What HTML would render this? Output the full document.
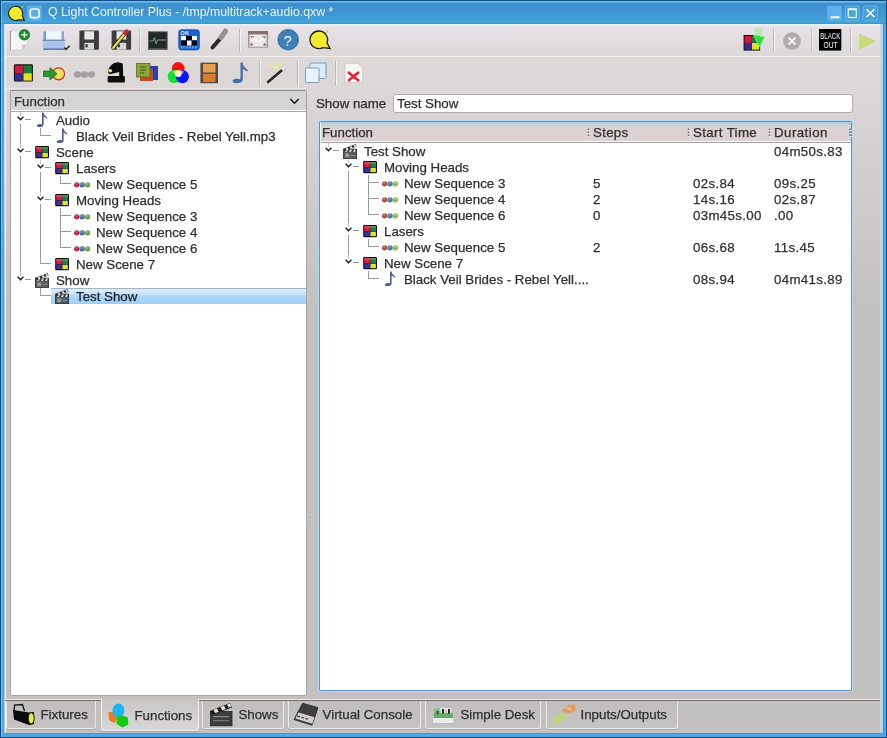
<!DOCTYPE html>
<html><head><meta charset="utf-8">
<style>
*{margin:0;padding:0;box-sizing:border-box}
html,body{width:887px;height:738px;overflow:hidden;background:#4a9dd6;font-family:"Liberation Sans",sans-serif;font-size:13.3px;color:#2f2f2f}
.a{position:absolute}
.t{position:absolute;white-space:nowrap;line-height:16px;height:16px;-webkit-text-stroke:0.25px #2f2f2f}
#frame{left:0;top:0;width:887px;height:738px;background:#4ea8e6;border:1px solid #0e4c7e}
#tb{left:1px;top:1px;width:885px;height:23px;background:linear-gradient(#6cc0f6 0,#5aaee6 1.5px,#3e8fcb 2.5px,#3f95d0 12px,#43a6dc 22px,#4a82aa 23px)}
#lline{left:1px;top:1px;width:1px;height:736px;background:#6cc0f2}
#title{left:48px;top:4px;font-size:12.3px;color:#e8f4fc;line-height:16px}
#content{left:4px;top:24px;width:876px;height:709px;background:linear-gradient(#dedada 0px,#dcd8d8 60px,#c3c0c0 280px,#c3c0c0 709px)}
.panel{background:#fff;border:1px solid #a9a5a5;border-radius:2px}
.hdr{background:linear-gradient(#dcd8d8,#d6d2d2)}
.sep{position:absolute;width:1px;background:#b8b4b4;box-shadow:1px 0 0 #f0eeee}
.sel{background:linear-gradient(#9fb6c6 0,#9fb6c6 1px,#dcedfa 1px,#c6def2 7px,#a9d5f8 8px,#a4d0f4 15px,#98c6ec 16px)}
.selt{color:#0e1c28}
.tab{background:linear-gradient(#c0bdbd,#c6c4c2);border:1px solid #ebe7e7;border-top:none;border-radius:0 0 3px 3px;box-shadow:0 1px 0 #b0acac}
.tabsel{background:linear-gradient(#c8c5c5,#d8d6d8);border:1px solid #f0eeee;border-top:none;border-radius:0 0 3px 3px;box-shadow:0 1px 0 #a8a4a4}
</style></head><body><div id="root" class="a" style="left:0;top:0;width:887px;height:738px;overflow:hidden;will-change:transform">
<div id="frame" class="a"></div>
<div id="tb" class="a"></div><div id="lline" class="a"></div>
<svg class="a" style="left:0;top:0" width="887" height="26" viewBox="0 0 887 26"><rect x="0" y="0" width="887" height="738" fill="none"/><path d="M22.27 15.83 A7.1 7.1 0 1 0 18.93 19.67 L24.2 20.4 Z" fill="#f2ea30" stroke="#1e1e14" stroke-width="1.1"/><path d="M21.5 8 L23.5 6" stroke="#6ad04a" stroke-width="1.5"/><rect x="27" y="5.6" width="15" height="15.5" rx="1.5" fill="#5aaee6"/><rect x="30.3" y="9" width="8.8" height="8.6" rx="2.2" fill="none" stroke="#f4fbff" stroke-width="1.7"/><rect x="827.2" y="5.7" width="14.6" height="15" rx="1.5" fill="#5db0ea"/><rect x="830.5" y="16.3" width="9" height="2" fill="#f4fbff"/><rect x="845.3" y="6" width="14" height="14.4" rx="1.5" fill="#4a9ed8" stroke="#6cbcee" stroke-width="0.8"/><rect x="848.3" y="9" width="8" height="8.5" fill="#45a6d8" stroke="#f4fbff" stroke-width="1.2"/><rect x="848.3" y="8.6" width="8" height="1.6" fill="#f4fbff"/><rect x="863.2" y="6" width="14.4" height="14.4" rx="1.5" fill="#4a9ed8" stroke="#6cbcee" stroke-width="0.8"/><path d="M866.5 9.3 L874.3 17 M874.3 9.3 L866.5 17" stroke="#f4fbff" stroke-width="1.6"/></svg>
<div id="title" class="a">Q Light Controller Plus - /tmp/multitrack+audio.qxw *</div>
<div id="content" class="a"></div>
<div class="a" style="left:880px;top:24px;width:3px;height:710px;background:linear-gradient(90deg,#e8f4f8,#a8c4d4 1px,#c0dcec 2px)"></div>
<div class="a" style="left:883px;top:24px;width:1px;height:710px;background:#4c86b8"></div>
<div class="a" style="left:4px;top:733px;width:880px;height:1px;background:#5a90c0"></div>
<div class="a" style="left:4px;top:24px;width:876px;height:1px;background:#e4f2f6"></div>
<div class="a" style="left:5px;top:25px;width:1px;height:708px;background:#eef4f6"></div>
<div class="a" style="left:6px;top:25px;width:874px;height:31px;background:linear-gradient(#eef2f2 0,#e9e3e9 1px,#e2dee2 12px,#dcd9d9 30px)"></div>
<div class="a" style="left:6px;top:56px;width:875px;height:1px;background:#f0eeee"></div>
<div class="a" style="left:6px;top:88px;width:300px;height:1px;background:#ebe9e9"></div>
<svg class="a" style="left:0;top:0" width="887" height="92" viewBox="0 0 887 92"><path d="M10.5 31 L26.5 31 L27.5 44 L22 50 L10.5 50 Z" fill="#f4f4f4" stroke="#d0d0d0" stroke-width="0.8"/><rect x="10" y="31" width="1" height="19" fill="#9a9a9a"/><path d="M27.5 44 L22 50 L22 45 Z" fill="#c8c8c8"/><circle cx="24.4" cy="34.8" r="5.2" fill="#1a8e2c" stroke="#0f6a1c" stroke-width="0.8"/><path d="M24.4 31.8 V37.8 M21.4 34.8 H27.4" stroke="#e8ffe8" stroke-width="1.4"/><rect x="44" y="31.3" width="19.5" height="9" fill="#eaf8ff"/><rect x="43.5" y="31.3" width="2.5" height="9" fill="#7b98c8"/><rect x="61.5" y="31.3" width="2.5" height="9" fill="#8aa6d4"/><rect x="42.8" y="39.7" width="22.2" height="9.6" fill="#a9c3ee"/><rect x="42.8" y="39.7" width="22.2" height="1.2" fill="#6e86b0"/><rect x="43.5" y="48.5" width="21" height="1.3" fill="#56698c"/><path d="M64.3 47.5 L66 49.5 L69.6 45.8" fill="none" stroke="#1a1a1a" stroke-width="1.4"/><rect x="79.4" y="30.5" width="19.5" height="19.2" rx="1" fill="#3c3c3c"/><rect x="84.4" y="31.3" width="9.6" height="8.2" fill="#e9e9e9"/><rect x="84.4" y="42.8" width="9.6" height="6.9" fill="#d6d6d6"/><rect x="85.4" y="44.3" width="2.4" height="3" fill="#3c3c3c"/><rect x="111.6" y="30.5" width="19.5" height="19.2" rx="1" fill="#3c3c3c"/><rect x="116.6" y="31.3" width="9.6" height="8.2" fill="#e9e9e9"/><rect x="116.6" y="42.8" width="9.6" height="6.9" fill="#d6d6d6"/><rect x="117.6" y="44.3" width="2.4" height="3" fill="#3c3c3c"/><path d="M112.5 48.8 L126.5 31.5" stroke="#222" stroke-width="3.8"/><path d="M112.5 48.8 L126.5 31.5" stroke="#e4dc50" stroke-width="2.2"/><path d="M124.2 34.3 L127.8 30" stroke="#c8263a" stroke-width="3.6"/><rect x="139" y="29" width="1" height="23" fill="#bdb8b8"/><rect x="140" y="29" width="1" height="23" fill="#f2f0f0"/><rect x="148" y="31.3" width="19.7" height="18.6" fill="#5a5a5a"/><rect x="149" y="32.3" width="17.7" height="16" fill="#1f2a26"/><path d="M149.5 41 H153 L154.5 37.5 L156 44 L157.5 40 H166" fill="none" stroke="#7a9a8a" stroke-width="1"/><rect x="178.8" y="29.8" width="20.5" height="20.1" rx="2.5" fill="#1a62d0" stroke="#0e4aa8" stroke-width="0.8"/><rect x="181" y="35.9" width="16" height="9.6" fill="#020818"/><rect x="181" y="35.9" width="5" height="4.3" fill="#f4f8ff"/><rect x="192" y="35.9" width="5" height="4.3" fill="#f4f8ff"/><rect x="187" y="40.5" width="4.5" height="5" fill="#f4f8ff"/><text x="180.5" y="35" font-size="5.5" fill="#d8e8ff" font-family="Liberation Sans" font-weight="bold">ON</text><path d="M181.5 46 V48.5 M184 46 V48.5 M187 46 V48.5 M190 46 V48.5 M193 46 V48.5 M196 46 V48.5" stroke="#8ab8f0" stroke-width="1.2"/><path d="M212.5 47.5 L222.5 36" stroke="#2a2a2a" stroke-width="4" stroke-linecap="round"/><path d="M221 37.5 L225.5 31" stroke="#9a9090" stroke-width="5" stroke-linecap="round"/><rect x="239" y="29" width="1" height="23" fill="#bdb8b8"/><rect x="240" y="29" width="1" height="23" fill="#f2f0f0"/><rect x="248.1" y="31.1" width="20" height="16.6" fill="#a49494"/><rect x="248.1" y="31.1" width="20" height="3.4" fill="#86706f"/><rect x="249.6" y="34.5" width="17" height="12.2" fill="#efe9e9"/><path d="M250.5 36 L254.5 36.5 L252 39 Z M265.8 36 L261.8 36.5 L264.3 39 Z M250.5 46 L251 42.5 L253.5 45 Z M265.8 46 L265.3 42.5 L262.8 45 Z" fill="#7a6666"/><path d="M252 37.5 L257 41.5 M264.3 37.5 L259.3 41.5" stroke="#ffffff" stroke-width="1.3"/><circle cx="288.2" cy="39.7" r="10.3" fill="#3f7fb8"/><circle cx="288.2" cy="39.7" r="10.3" fill="none" stroke="#2a5f94" stroke-width="0.8"/><text x="283.6" y="45.6" font-size="15" fill="#f0f8ff" font-family="Liberation Sans">?</text><path d="M327.07 42.81 A8.8 8.8 0 1 0 322.93 47.57 L330 48.5 Z" fill="#f2ea30" stroke="#1e1e14" stroke-width="1.3"/><path d="M325.5 33 L328 30.5" stroke="#b8d860" stroke-width="2"/><rect x="743.6" y="35" width="16.5" height="15.6" fill="#111"/><rect x="744.6" y="36" width="7.2" height="6.8" fill="#d01a3c"/><rect x="752" y="36" width="7.2" height="6.8" fill="#1d7a3a"/><rect x="744.6" y="43" width="7.2" height="6.6" fill="#3a2e8c"/><rect x="752" y="43" width="7.2" height="6.6" fill="#e2e41e"/><rect x="754.5" y="28" width="7.5" height="8" fill="#b4e8a8" opacity="0.85"/><path d="M753.5 35 L764.5 37 L759.5 47 Z" fill="#2ee02e" stroke="#7af07a" stroke-width="0.8"/><rect x="773" y="29" width="1" height="23" fill="#bdb8b8"/><rect x="774" y="29" width="1" height="23" fill="#f2f0f0"/><circle cx="792" cy="41" r="8.8" fill="#b0acac"/><path d="M788.5 37.5 L795.5 44.5 M795.5 37.5 L788.5 44.5" stroke="#f4f4f4" stroke-width="1.8"/><rect x="811" y="29" width="1" height="23" fill="#bdb8b8"/><rect x="812" y="29" width="1" height="23" fill="#f2f0f0"/><rect x="819" y="29" width="22.3" height="21.6" fill="#000"/><text x="820.3" y="38.5" font-size="8.3" fill="#fff" font-family="Liberation Sans" textLength="20" lengthAdjust="spacingAndGlyphs">BLACK</text><text x="823.5" y="48.3" font-size="9" fill="#fff" font-family="Liberation Sans" textLength="14" lengthAdjust="spacingAndGlyphs">OUT</text><rect x="850" y="29" width="1" height="23" fill="#bdb8b8"/><rect x="851" y="29" width="1" height="23" fill="#f2f0f0"/><path d="M859 33.5 L876 41.5 L859 49.7 Z" fill="#c6dc78"/><rect x="13.9" y="64.3" width="19" height="17.3" rx="1" fill="#111"/><rect x="15" y="65.4" width="8.3" height="7.6" fill="#d01a3c"/><rect x="23.5" y="65.4" width="8.3" height="7.6" fill="#1d7a3a"/><rect x="15" y="73.2" width="8.3" height="7.4" fill="#3a2e8c"/><rect x="23.5" y="73.2" width="8.3" height="7.4" fill="#e2e41e"/><circle cx="58.6" cy="73.8" r="6" fill="#f0e060" stroke="#d02828" stroke-width="1.2"/><path d="M43.5 71 H50 V67.6 L57 73.8 L50 80 V76.6 H43.5 Z" fill="#2a9a2a" stroke="#1a6a1a" stroke-width="0.8"/><ellipse cx="77.5" cy="74.5" rx="3.6" ry="3.2" fill="#a6a2a2"/><ellipse cx="84.5" cy="74.5" rx="3.6" ry="3.2" fill="#a6a2a2"/><ellipse cx="91.5" cy="74.5" rx="3.6" ry="3.2" fill="#a6a2a2"/><path d="M108 72.5 C108.3 66.5 113 62.5 118 62.3 L122.8 63.5 L123.2 76.5 L119.2 76.2 L119.2 72 L113 73.6 L109.5 74.2 Z" fill="#0c0c0c"/><rect x="107.7" y="75.9" width="17.2" height="6.5" rx="1.2" fill="#0c0c0c"/><ellipse cx="110.2" cy="70.8" rx="2" ry="1.7" fill="#dfe88a"/><rect x="147" y="66" width="11" height="14" fill="#2a3ea8"/><rect x="140" y="69" width="13" height="12" fill="#c84a20"/><rect x="136.5" y="63.5" width="13.5" height="13.5" fill="#8aa838" stroke="#5a6a20" stroke-width="0.8"/><path d="M140 67 H146 M140 70 H146 M140 73 H144" stroke="#3a4a10" stroke-width="0.9"/><circle cx="178.2" cy="68.5" r="6.4" fill="#ff1010"/><circle cx="174.3" cy="76.5" r="6.6" fill="#10e030"/><circle cx="182.4" cy="76.6" r="6.6" fill="#1010ff"/><circle cx="178.3" cy="73.8" r="3.2" fill="#ffffff"/><path d="M172.5 71.5 Q178 68.5 184 71.5 L182 74 L175 74 Z" fill="#fff080" opacity="0.7"/><rect x="200.4" y="62.7" width="17.6" height="20.5" fill="#4a4a4a"/><rect x="203" y="64" width="12.5" height="8.5" fill="#e8a050"/><rect x="203" y="73.8" width="12.5" height="8.2" fill="#e07a28"/><path d="M240.5 62.5 L242.8 62.5 L242.8 79.5 C242.8 82.7 238.6 83.5 235 83 C231.6 82.5 232 79.7 235 79 C237 78.5 239 78.8 240.5 79.2 Z" fill="#4a6aa8"/><path d="M241.5 62.5 C243 66 246 68 248 70.5 L247 71.5 C245.5 70 243.5 69 241.5 68.5 Z" fill="#4a6aa8"/><rect x="259" y="61" width="1" height="25" fill="#bdb8b8"/><rect x="260" y="61" width="1" height="25" fill="#f2f0f0"/><path d="M268 82 L284.5 68" stroke="#2a2a2a" stroke-width="2.6" stroke-linecap="round"/><path d="M282 70 L285.5 67" stroke="#f0f0f0" stroke-width="2.6"/><circle cx="270" cy="65" r="1.8" fill="#e8ec80"/><circle cx="275.8" cy="67.5" r="2" fill="#e8ec80"/><circle cx="280.3" cy="64.5" r="1.8" fill="#e8ec80"/><rect x="297" y="61" width="1" height="25" fill="#bdb8b8"/><rect x="298" y="61" width="1" height="25" fill="#f2f0f0"/><rect x="310" y="63" width="16" height="15.5" rx="1" fill="#d8ecfc" stroke="#7d9cb8" stroke-width="1"/><rect x="305.5" y="68" width="13.5" height="14.5" rx="1" fill="#e6f4ff" stroke="#7d9cb8" stroke-width="1"/><rect x="335" y="61" width="1" height="25" fill="#bdb8b8"/><rect x="336" y="61" width="1" height="25" fill="#f2f0f0"/><path d="M345 63.5 L358 63.5 L362.5 68 L362.5 82.5 L345 82.5 Z" fill="#f8f8f8" stroke="#c8c8c8" stroke-width="0.8"/><path d="M348 72 L359 81 M359 72 L348 81" stroke="#e8202a" stroke-width="2.4"/></svg>

<!-- left panel -->
<div class="a panel" style="left:10px;top:90px;width:297px;height:606px;border-color:#8e8c8c #a4a2a2 #a8a6a6 #a4a2a2"></div>
<div class="a" style="left:11px;top:91px;width:295px;height:21px;background:#d6d5d5;border-bottom:1px solid #aaa8a8;box-shadow:inset 0 -1px 0 #fafafa"></div>
<div class="t" style="left:14px;top:94px">Function</div>
<svg class="a" style="left:17.0px;top:116.3px" width="7" height="5" viewBox="0 0 7 5"><path d="M0.6 0.8 L3.5 3.8 L6.4 0.8" fill="none" stroke="#1c1c1c" stroke-width="1.45"/></svg>
<div class="a" style="left:20px;top:112px;width:1px;height:4px;background:#c8c8c8"></div>
<div class="a" style="left:20px;top:124px;width:1px;height:4px;background:#9a9a9a"></div>
<div class="a" style="left:25px;top:119px;width:6px;height:1px;background:#9a9a9a"></div>
<svg class="a" style="left:36px;top:112px" width="12" height="16" viewBox="0 0 12 16"><path d="M6 0.5 L7.6 0.5 L7.6 12.5 C7.6 14.8 4.5 15.3 2.2 14.9 C0.2 14.5 0.5 12.6 2.6 12.2 C4 11.9 5.2 12 6 12.4 Z" fill="#4e5c9c"/><path d="M7 0.5 C8 3 10.5 4.5 11.6 6.3 L10.9 6.8 C9.8 5.6 8.2 5 7 4.6 Z" fill="#4e5c9c"/></svg>
<div class="t" style="left:56px;top:113px">Audio</div>
<div class="a" style="left:20px;top:128px;width:1px;height:16px;background:#9a9a9a"></div>
<div class="a" style="left:40px;top:128px;width:1px;height:8px;background:#9a9a9a"></div>
<div class="a" style="left:40px;top:135px;width:11px;height:1px;background:#9a9a9a"></div>
<svg class="a" style="left:56px;top:128px" width="12" height="16" viewBox="0 0 12 16"><path d="M6 0.5 L7.6 0.5 L7.6 12.5 C7.6 14.8 4.5 15.3 2.2 14.9 C0.2 14.5 0.5 12.6 2.6 12.2 C4 11.9 5.2 12 6 12.4 Z" fill="#4e5c9c"/><path d="M7 0.5 C8 3 10.5 4.5 11.6 6.3 L10.9 6.8 C9.8 5.6 8.2 5 7 4.6 Z" fill="#4e5c9c"/></svg>
<div class="t" style="left:76px;top:129px">Black Veil Brides - Rebel Yell.mp3</div>
<svg class="a" style="left:17.0px;top:148.3px" width="7" height="5" viewBox="0 0 7 5"><path d="M0.6 0.8 L3.5 3.8 L6.4 0.8" fill="none" stroke="#1c1c1c" stroke-width="1.45"/></svg>
<div class="a" style="left:20px;top:144px;width:1px;height:4px;background:#c8c8c8"></div>
<div class="a" style="left:20px;top:156px;width:1px;height:4px;background:#9a9a9a"></div>
<div class="a" style="left:25px;top:151px;width:6px;height:1px;background:#9a9a9a"></div>
<svg class="a" style="left:35px;top:146px" width="14" height="13" viewBox="0 0 14 13"><rect x="0.2" y="0" width="13.8" height="12.2" rx="1.3" fill="#0a0a0a"/><rect x="1.2" y="1" width="5.8" height="5.4" fill="#d81840"/><rect x="1.2" y="1" width="5.8" height="2.2" fill="#ee3a62"/><rect x="7.3" y="1" width="5.7" height="5.6" fill="#247e42"/><rect x="7.3" y="1" width="5.7" height="2" fill="#3a9a5a"/><rect x="1.2" y="6.6" width="5.8" height="4.6" fill="#3e2f96"/><rect x="7.4" y="6.9" width="5.5" height="4.3" fill="#d6e42a"/></svg>
<div class="t" style="left:56px;top:145px">Scene</div>
<div class="a" style="left:20px;top:160px;width:1px;height:16px;background:#9a9a9a"></div>
<svg class="a" style="left:37.0px;top:164.3px" width="7" height="5" viewBox="0 0 7 5"><path d="M0.6 0.8 L3.5 3.8 L6.4 0.8" fill="none" stroke="#1c1c1c" stroke-width="1.45"/></svg>
<div class="a" style="left:40px;top:160px;width:1px;height:4px;background:#c8c8c8"></div>
<div class="a" style="left:40px;top:172px;width:1px;height:4px;background:#9a9a9a"></div>
<div class="a" style="left:45px;top:167px;width:6px;height:1px;background:#9a9a9a"></div>
<svg class="a" style="left:55px;top:162px" width="14" height="13" viewBox="0 0 14 13"><rect x="0.2" y="0" width="13.8" height="12.2" rx="1.3" fill="#0a0a0a"/><rect x="1.2" y="1" width="5.8" height="5.4" fill="#d81840"/><rect x="1.2" y="1" width="5.8" height="2.2" fill="#ee3a62"/><rect x="7.3" y="1" width="5.7" height="5.6" fill="#247e42"/><rect x="7.3" y="1" width="5.7" height="2" fill="#3a9a5a"/><rect x="1.2" y="6.6" width="5.8" height="4.6" fill="#3e2f96"/><rect x="7.4" y="6.9" width="5.5" height="4.3" fill="#d6e42a"/></svg>
<div class="t" style="left:76px;top:161px">Lasers</div>
<div class="a" style="left:20px;top:176px;width:1px;height:16px;background:#9a9a9a"></div>
<div class="a" style="left:40px;top:176px;width:1px;height:16px;background:#9a9a9a"></div>
<div class="a" style="left:60px;top:176px;width:1px;height:8px;background:#9a9a9a"></div>
<div class="a" style="left:60px;top:183px;width:11px;height:1px;background:#9a9a9a"></div>
<svg class="a" style="left:74px;top:182px" width="17" height="6" viewBox="0 0 17 6"><ellipse cx="2.7" cy="2.8" rx="2.7" ry="2.6" fill="#c8203c"/><ellipse cx="8.100000000000001" cy="2.8" rx="2.7" ry="2.6" fill="#3f74a8"/><ellipse cx="13.5" cy="2.8" rx="2.7" ry="2.6" fill="#6fa048"/><ellipse cx="2.2" cy="1.9" rx="1.2" ry="0.9" fill="#fff" opacity="0.35"/><ellipse cx="7.6000000000000005" cy="1.9" rx="1.2" ry="0.9" fill="#fff" opacity="0.35"/><ellipse cx="13.0" cy="1.9" rx="1.2" ry="0.9" fill="#fff" opacity="0.35"/></svg>
<div class="t" style="left:96px;top:177px">New Sequence 5</div>
<div class="a" style="left:20px;top:192px;width:1px;height:16px;background:#9a9a9a"></div>
<svg class="a" style="left:37.0px;top:196.3px" width="7" height="5" viewBox="0 0 7 5"><path d="M0.6 0.8 L3.5 3.8 L6.4 0.8" fill="none" stroke="#1c1c1c" stroke-width="1.45"/></svg>
<div class="a" style="left:40px;top:192px;width:1px;height:4px;background:#c8c8c8"></div>
<div class="a" style="left:40px;top:204px;width:1px;height:4px;background:#9a9a9a"></div>
<div class="a" style="left:45px;top:199px;width:6px;height:1px;background:#9a9a9a"></div>
<svg class="a" style="left:55px;top:194px" width="14" height="13" viewBox="0 0 14 13"><rect x="0.2" y="0" width="13.8" height="12.2" rx="1.3" fill="#0a0a0a"/><rect x="1.2" y="1" width="5.8" height="5.4" fill="#d81840"/><rect x="1.2" y="1" width="5.8" height="2.2" fill="#ee3a62"/><rect x="7.3" y="1" width="5.7" height="5.6" fill="#247e42"/><rect x="7.3" y="1" width="5.7" height="2" fill="#3a9a5a"/><rect x="1.2" y="6.6" width="5.8" height="4.6" fill="#3e2f96"/><rect x="7.4" y="6.9" width="5.5" height="4.3" fill="#d6e42a"/></svg>
<div class="t" style="left:76px;top:193px">Moving Heads</div>
<div class="a" style="left:20px;top:208px;width:1px;height:16px;background:#9a9a9a"></div>
<div class="a" style="left:40px;top:208px;width:1px;height:16px;background:#9a9a9a"></div>
<div class="a" style="left:60px;top:208px;width:1px;height:8px;background:#9a9a9a"></div>
<div class="a" style="left:60px;top:216px;width:1px;height:8px;background:#9a9a9a"></div>
<div class="a" style="left:60px;top:215px;width:11px;height:1px;background:#9a9a9a"></div>
<svg class="a" style="left:74px;top:214px" width="17" height="6" viewBox="0 0 17 6"><ellipse cx="2.7" cy="2.8" rx="2.7" ry="2.6" fill="#c8203c"/><ellipse cx="8.100000000000001" cy="2.8" rx="2.7" ry="2.6" fill="#3f74a8"/><ellipse cx="13.5" cy="2.8" rx="2.7" ry="2.6" fill="#6fa048"/><ellipse cx="2.2" cy="1.9" rx="1.2" ry="0.9" fill="#fff" opacity="0.35"/><ellipse cx="7.6000000000000005" cy="1.9" rx="1.2" ry="0.9" fill="#fff" opacity="0.35"/><ellipse cx="13.0" cy="1.9" rx="1.2" ry="0.9" fill="#fff" opacity="0.35"/></svg>
<div class="t" style="left:96px;top:209px">New Sequence 3</div>
<div class="a" style="left:20px;top:224px;width:1px;height:16px;background:#9a9a9a"></div>
<div class="a" style="left:40px;top:224px;width:1px;height:16px;background:#9a9a9a"></div>
<div class="a" style="left:60px;top:224px;width:1px;height:8px;background:#9a9a9a"></div>
<div class="a" style="left:60px;top:232px;width:1px;height:8px;background:#9a9a9a"></div>
<div class="a" style="left:60px;top:231px;width:11px;height:1px;background:#9a9a9a"></div>
<svg class="a" style="left:74px;top:230px" width="17" height="6" viewBox="0 0 17 6"><ellipse cx="2.7" cy="2.8" rx="2.7" ry="2.6" fill="#c8203c"/><ellipse cx="8.100000000000001" cy="2.8" rx="2.7" ry="2.6" fill="#3f74a8"/><ellipse cx="13.5" cy="2.8" rx="2.7" ry="2.6" fill="#6fa048"/><ellipse cx="2.2" cy="1.9" rx="1.2" ry="0.9" fill="#fff" opacity="0.35"/><ellipse cx="7.6000000000000005" cy="1.9" rx="1.2" ry="0.9" fill="#fff" opacity="0.35"/><ellipse cx="13.0" cy="1.9" rx="1.2" ry="0.9" fill="#fff" opacity="0.35"/></svg>
<div class="t" style="left:96px;top:225px">New Sequence 4</div>
<div class="a" style="left:20px;top:240px;width:1px;height:16px;background:#9a9a9a"></div>
<div class="a" style="left:40px;top:240px;width:1px;height:16px;background:#9a9a9a"></div>
<div class="a" style="left:60px;top:240px;width:1px;height:8px;background:#9a9a9a"></div>
<div class="a" style="left:60px;top:247px;width:11px;height:1px;background:#9a9a9a"></div>
<svg class="a" style="left:74px;top:246px" width="17" height="6" viewBox="0 0 17 6"><ellipse cx="2.7" cy="2.8" rx="2.7" ry="2.6" fill="#c8203c"/><ellipse cx="8.100000000000001" cy="2.8" rx="2.7" ry="2.6" fill="#3f74a8"/><ellipse cx="13.5" cy="2.8" rx="2.7" ry="2.6" fill="#6fa048"/><ellipse cx="2.2" cy="1.9" rx="1.2" ry="0.9" fill="#fff" opacity="0.35"/><ellipse cx="7.6000000000000005" cy="1.9" rx="1.2" ry="0.9" fill="#fff" opacity="0.35"/><ellipse cx="13.0" cy="1.9" rx="1.2" ry="0.9" fill="#fff" opacity="0.35"/></svg>
<div class="t" style="left:96px;top:241px">New Sequence 6</div>
<div class="a" style="left:20px;top:256px;width:1px;height:16px;background:#9a9a9a"></div>
<div class="a" style="left:40px;top:256px;width:1px;height:8px;background:#9a9a9a"></div>
<div class="a" style="left:40px;top:263px;width:11px;height:1px;background:#9a9a9a"></div>
<svg class="a" style="left:55px;top:258px" width="14" height="13" viewBox="0 0 14 13"><rect x="0.2" y="0" width="13.8" height="12.2" rx="1.3" fill="#0a0a0a"/><rect x="1.2" y="1" width="5.8" height="5.4" fill="#d81840"/><rect x="1.2" y="1" width="5.8" height="2.2" fill="#ee3a62"/><rect x="7.3" y="1" width="5.7" height="5.6" fill="#247e42"/><rect x="7.3" y="1" width="5.7" height="2" fill="#3a9a5a"/><rect x="1.2" y="6.6" width="5.8" height="4.6" fill="#3e2f96"/><rect x="7.4" y="6.9" width="5.5" height="4.3" fill="#d6e42a"/></svg>
<div class="t" style="left:76px;top:257px">New Scene 7</div>
<svg class="a" style="left:17.0px;top:276.3px" width="7" height="5" viewBox="0 0 7 5"><path d="M0.6 0.8 L3.5 3.8 L6.4 0.8" fill="none" stroke="#1c1c1c" stroke-width="1.45"/></svg>
<div class="a" style="left:20px;top:272px;width:1px;height:4px;background:#c8c8c8"></div>
<div class="a" style="left:25px;top:279px;width:6px;height:1px;background:#9a9a9a"></div>
<svg class="a" style="left:35px;top:272px" width="14" height="16" viewBox="0 0 14 16"><rect x="0.6" y="6.2" width="13" height="9.6" fill="#5a5a5a" stroke="#2c2c2c" stroke-width="0.9"/><path d="M1.2 6.5 H13 V9 H1.2 Z" fill="#3a3a3a"/><path d="M3 6.5 L5 6.5 L4 9 L2 9 Z M7 6.5 L9 6.5 L8 9 L6 9 Z M11 6.5 L13 6.5 L12 9 L10 9 Z" fill="#d8d8d8"/><rect x="2.2" y="10.5" width="4" height="3.6" fill="#9a9a9a"/><rect x="7.5" y="12" width="5" height="1" fill="#8a8a8a"/><path d="M0.6 5.8 L12.6 1 L13.6 3.4 L1.6 8 Z" fill="#2a2a2a"/><path d="M2.6 5.4 L4.6 4.6 L5.6 6.6 L3.6 7.3 Z M6.6 3.8 L8.6 3 L9.6 5 L7.6 5.7 Z M10.4 2.3 L12.2 1.6 L13.1 3.4 L11.4 4 Z" fill="#e6e6e6"/></svg>
<div class="t" style="left:56px;top:273px">Show</div>
<div class="a sel" style="left:51px;top:288px;width:255px;height:16px"></div>
<div class="a" style="left:40px;top:288px;width:1px;height:8px;background:#9a9a9a"></div>
<div class="a" style="left:40px;top:295px;width:11px;height:1px;background:#9a9a9a"></div>
<svg class="a" style="left:55px;top:288px" width="14" height="16" viewBox="0 0 14 16"><rect x="0.6" y="6.2" width="13" height="9.6" fill="#4a5e6a" stroke="#2c2c2c" stroke-width="0.9"/><path d="M1.2 6.5 H13 V9 H1.2 Z" fill="#3a3a3a"/><path d="M3 6.5 L5 6.5 L4 9 L2 9 Z M7 6.5 L9 6.5 L8 9 L6 9 Z M11 6.5 L13 6.5 L12 9 L10 9 Z" fill="#d8d8d8"/><rect x="2.2" y="10.5" width="4" height="3.6" fill="#9a9a9a"/><rect x="7.5" y="12" width="5" height="1" fill="#8a8a8a"/><path d="M0.6 5.8 L12.6 1 L13.6 3.4 L1.6 8 Z" fill="#2a2a2a"/><path d="M2.6 5.4 L4.6 4.6 L5.6 6.6 L3.6 7.3 Z M6.6 3.8 L8.6 3 L9.6 5 L7.6 5.7 Z M10.4 2.3 L12.2 1.6 L13.1 3.4 L11.4 4 Z" fill="#e6e6e6"/></svg>
<div class="t selt" style="left:76px;top:289px">Test Show</div>

<!-- right -->
<div class="t" style="left:316px;top:96px">Show name</div>
<div class="a panel" style="left:393px;top:94px;width:460px;height:19px;border-color:#b0acac;border-radius:3px"></div>
<div class="t" style="left:397px;top:96px">Test Show</div>

<div class="a panel" style="left:319px;top:121px;width:533px;height:570px;border:1.5px solid #5296cc;border-top:1px solid #6a90b0;box-shadow:0 0 0 1px #b4daf4;border-radius:2px"></div>
<div class="a" style="left:320.5px;top:122px;width:530px;height:21px;background:linear-gradient(#b4ccd8,#d4d4d2 4px,#dcd3d1 6px,#dcd2d2 18px);border-bottom:1px solid #a89e9e;box-shadow:inset 0 -1px 0 #fdfafa"></div>
<div class="t" style="left:322px;top:125px">Function</div>
<div class="t" style="left:593px;top:125px;letter-spacing:0.3px">Steps</div>
<div class="t" style="left:693px;top:125px;letter-spacing:0.35px">Start Time</div>
<div class="t" style="left:774px;top:125px;letter-spacing:0.45px">Duration</div>
<svg class="a" style="left:325.0px;top:147.3px" width="7" height="5" viewBox="0 0 7 5"><path d="M0.6 0.8 L3.5 3.8 L6.4 0.8" fill="none" stroke="#1c1c1c" stroke-width="1.45"/></svg>
<div class="a" style="left:328px;top:143px;width:1px;height:4px;background:#c8c8c8"></div>
<div class="a" style="left:333px;top:150px;width:6px;height:1px;background:#9a9a9a"></div>
<svg class="a" style="left:343px;top:143px" width="14" height="16" viewBox="0 0 14 16"><rect x="0.6" y="6.2" width="13" height="9.6" fill="#5a5a5a" stroke="#2c2c2c" stroke-width="0.9"/><path d="M1.2 6.5 H13 V9 H1.2 Z" fill="#3a3a3a"/><path d="M3 6.5 L5 6.5 L4 9 L2 9 Z M7 6.5 L9 6.5 L8 9 L6 9 Z M11 6.5 L13 6.5 L12 9 L10 9 Z" fill="#d8d8d8"/><rect x="2.2" y="10.5" width="4" height="3.6" fill="#9a9a9a"/><rect x="7.5" y="12" width="5" height="1" fill="#8a8a8a"/><path d="M0.6 5.8 L12.6 1 L13.6 3.4 L1.6 8 Z" fill="#2a2a2a"/><path d="M2.6 5.4 L4.6 4.6 L5.6 6.6 L3.6 7.3 Z M6.6 3.8 L8.6 3 L9.6 5 L7.6 5.7 Z M10.4 2.3 L12.2 1.6 L13.1 3.4 L11.4 4 Z" fill="#e6e6e6"/></svg>
<div class="t" style="left:364px;top:144px">Test Show</div>
<svg class="a" style="left:345.0px;top:163.3px" width="7" height="5" viewBox="0 0 7 5"><path d="M0.6 0.8 L3.5 3.8 L6.4 0.8" fill="none" stroke="#1c1c1c" stroke-width="1.45"/></svg>
<div class="a" style="left:348px;top:159px;width:1px;height:4px;background:#c8c8c8"></div>
<div class="a" style="left:348px;top:171px;width:1px;height:4px;background:#9a9a9a"></div>
<div class="a" style="left:353px;top:166px;width:6px;height:1px;background:#9a9a9a"></div>
<svg class="a" style="left:363px;top:161px" width="14" height="13" viewBox="0 0 14 13"><rect x="0.2" y="0" width="13.8" height="12.2" rx="1.3" fill="#0a0a0a"/><rect x="1.2" y="1" width="5.8" height="5.4" fill="#d81840"/><rect x="1.2" y="1" width="5.8" height="2.2" fill="#ee3a62"/><rect x="7.3" y="1" width="5.7" height="5.6" fill="#247e42"/><rect x="7.3" y="1" width="5.7" height="2" fill="#3a9a5a"/><rect x="1.2" y="6.6" width="5.8" height="4.6" fill="#3e2f96"/><rect x="7.4" y="6.9" width="5.5" height="4.3" fill="#d6e42a"/></svg>
<div class="t" style="left:384px;top:160px">Moving Heads</div>
<div class="a" style="left:348px;top:175px;width:1px;height:16px;background:#9a9a9a"></div>
<div class="a" style="left:368px;top:175px;width:1px;height:8px;background:#9a9a9a"></div>
<div class="a" style="left:368px;top:183px;width:1px;height:8px;background:#9a9a9a"></div>
<div class="a" style="left:368px;top:182px;width:11px;height:1px;background:#9a9a9a"></div>
<svg class="a" style="left:382px;top:181px" width="17" height="6" viewBox="0 0 17 6"><ellipse cx="2.7" cy="2.8" rx="2.7" ry="2.6" fill="#c4442a"/><ellipse cx="8.100000000000001" cy="2.8" rx="2.7" ry="2.6" fill="#3f7cb0"/><ellipse cx="13.5" cy="2.8" rx="2.7" ry="2.6" fill="#a0b043"/><ellipse cx="2.2" cy="1.9" rx="1.2" ry="0.9" fill="#fff" opacity="0.35"/><ellipse cx="7.6000000000000005" cy="1.9" rx="1.2" ry="0.9" fill="#fff" opacity="0.35"/><ellipse cx="13.0" cy="1.9" rx="1.2" ry="0.9" fill="#fff" opacity="0.35"/></svg>
<div class="t" style="left:404px;top:176px">New Sequence 3</div>
<div class="a" style="left:348px;top:191px;width:1px;height:16px;background:#9a9a9a"></div>
<div class="a" style="left:368px;top:191px;width:1px;height:8px;background:#9a9a9a"></div>
<div class="a" style="left:368px;top:199px;width:1px;height:8px;background:#9a9a9a"></div>
<div class="a" style="left:368px;top:198px;width:11px;height:1px;background:#9a9a9a"></div>
<svg class="a" style="left:382px;top:197px" width="17" height="6" viewBox="0 0 17 6"><ellipse cx="2.7" cy="2.8" rx="2.7" ry="2.6" fill="#c4442a"/><ellipse cx="8.100000000000001" cy="2.8" rx="2.7" ry="2.6" fill="#3f7cb0"/><ellipse cx="13.5" cy="2.8" rx="2.7" ry="2.6" fill="#a0b043"/><ellipse cx="2.2" cy="1.9" rx="1.2" ry="0.9" fill="#fff" opacity="0.35"/><ellipse cx="7.6000000000000005" cy="1.9" rx="1.2" ry="0.9" fill="#fff" opacity="0.35"/><ellipse cx="13.0" cy="1.9" rx="1.2" ry="0.9" fill="#fff" opacity="0.35"/></svg>
<div class="t" style="left:404px;top:192px">New Sequence 4</div>
<div class="a" style="left:348px;top:207px;width:1px;height:16px;background:#9a9a9a"></div>
<div class="a" style="left:368px;top:207px;width:1px;height:8px;background:#9a9a9a"></div>
<div class="a" style="left:368px;top:214px;width:11px;height:1px;background:#9a9a9a"></div>
<svg class="a" style="left:382px;top:213px" width="17" height="6" viewBox="0 0 17 6"><ellipse cx="2.7" cy="2.8" rx="2.7" ry="2.6" fill="#c4442a"/><ellipse cx="8.100000000000001" cy="2.8" rx="2.7" ry="2.6" fill="#3f7cb0"/><ellipse cx="13.5" cy="2.8" rx="2.7" ry="2.6" fill="#a0b043"/><ellipse cx="2.2" cy="1.9" rx="1.2" ry="0.9" fill="#fff" opacity="0.35"/><ellipse cx="7.6000000000000005" cy="1.9" rx="1.2" ry="0.9" fill="#fff" opacity="0.35"/><ellipse cx="13.0" cy="1.9" rx="1.2" ry="0.9" fill="#fff" opacity="0.35"/></svg>
<div class="t" style="left:404px;top:208px">New Sequence 6</div>
<svg class="a" style="left:345.0px;top:227.3px" width="7" height="5" viewBox="0 0 7 5"><path d="M0.6 0.8 L3.5 3.8 L6.4 0.8" fill="none" stroke="#1c1c1c" stroke-width="1.45"/></svg>
<div class="a" style="left:348px;top:223px;width:1px;height:4px;background:#c8c8c8"></div>
<div class="a" style="left:348px;top:235px;width:1px;height:4px;background:#9a9a9a"></div>
<div class="a" style="left:353px;top:230px;width:6px;height:1px;background:#9a9a9a"></div>
<svg class="a" style="left:363px;top:225px" width="14" height="13" viewBox="0 0 14 13"><rect x="0.2" y="0" width="13.8" height="12.2" rx="1.3" fill="#0a0a0a"/><rect x="1.2" y="1" width="5.8" height="5.4" fill="#d81840"/><rect x="1.2" y="1" width="5.8" height="2.2" fill="#ee3a62"/><rect x="7.3" y="1" width="5.7" height="5.6" fill="#247e42"/><rect x="7.3" y="1" width="5.7" height="2" fill="#3a9a5a"/><rect x="1.2" y="6.6" width="5.8" height="4.6" fill="#3e2f96"/><rect x="7.4" y="6.9" width="5.5" height="4.3" fill="#d6e42a"/></svg>
<div class="t" style="left:384px;top:224px">Lasers</div>
<div class="a" style="left:348px;top:239px;width:1px;height:16px;background:#9a9a9a"></div>
<div class="a" style="left:368px;top:239px;width:1px;height:8px;background:#9a9a9a"></div>
<div class="a" style="left:368px;top:246px;width:11px;height:1px;background:#9a9a9a"></div>
<svg class="a" style="left:382px;top:245px" width="17" height="6" viewBox="0 0 17 6"><ellipse cx="2.7" cy="2.8" rx="2.7" ry="2.6" fill="#c4442a"/><ellipse cx="8.100000000000001" cy="2.8" rx="2.7" ry="2.6" fill="#3f7cb0"/><ellipse cx="13.5" cy="2.8" rx="2.7" ry="2.6" fill="#a0b043"/><ellipse cx="2.2" cy="1.9" rx="1.2" ry="0.9" fill="#fff" opacity="0.35"/><ellipse cx="7.6000000000000005" cy="1.9" rx="1.2" ry="0.9" fill="#fff" opacity="0.35"/><ellipse cx="13.0" cy="1.9" rx="1.2" ry="0.9" fill="#fff" opacity="0.35"/></svg>
<div class="t" style="left:404px;top:240px">New Sequence 5</div>
<svg class="a" style="left:345.0px;top:259.3px" width="7" height="5" viewBox="0 0 7 5"><path d="M0.6 0.8 L3.5 3.8 L6.4 0.8" fill="none" stroke="#1c1c1c" stroke-width="1.45"/></svg>
<div class="a" style="left:348px;top:255px;width:1px;height:4px;background:#c8c8c8"></div>
<div class="a" style="left:353px;top:262px;width:6px;height:1px;background:#9a9a9a"></div>
<svg class="a" style="left:363px;top:257px" width="14" height="13" viewBox="0 0 14 13"><rect x="0.2" y="0" width="13.8" height="12.2" rx="1.3" fill="#0a0a0a"/><rect x="1.2" y="1" width="5.8" height="5.4" fill="#d81840"/><rect x="1.2" y="1" width="5.8" height="2.2" fill="#ee3a62"/><rect x="7.3" y="1" width="5.7" height="5.6" fill="#247e42"/><rect x="7.3" y="1" width="5.7" height="2" fill="#3a9a5a"/><rect x="1.2" y="6.6" width="5.8" height="4.6" fill="#3e2f96"/><rect x="7.4" y="6.9" width="5.5" height="4.3" fill="#d6e42a"/></svg>
<div class="t" style="left:384px;top:256px">New Scene 7</div>
<div class="a" style="left:368px;top:271px;width:1px;height:8px;background:#9a9a9a"></div>
<div class="a" style="left:368px;top:278px;width:11px;height:1px;background:#9a9a9a"></div>
<svg class="a" style="left:384px;top:271px" width="12" height="16" viewBox="0 0 12 16"><path d="M6 0.5 L7.6 0.5 L7.6 12.5 C7.6 14.8 4.5 15.3 2.2 14.9 C0.2 14.5 0.5 12.6 2.6 12.2 C4 11.9 5.2 12 6 12.4 Z" fill="#4e5c9c"/><path d="M7 0.5 C8 3 10.5 4.5 11.6 6.3 L10.9 6.8 C9.8 5.6 8.2 5 7 4.6 Z" fill="#4e5c9c"/></svg>
<div class="t" style="left:404px;top:272px">Black Veil Brides - Rebel Yell....</div>
<div class="t" style="left:774px;top:144px;letter-spacing:0.33px">04m50s.83</div>
<div class="t" style="left:593px;top:176px;letter-spacing:0.33px">5</div>
<div class="t" style="left:693px;top:176px;letter-spacing:0.33px">02s.84</div>
<div class="t" style="left:774px;top:176px;letter-spacing:0.33px">09s.25</div>
<div class="t" style="left:593px;top:192px;letter-spacing:0.33px">2</div>
<div class="t" style="left:693px;top:192px;letter-spacing:0.33px">14s.16</div>
<div class="t" style="left:774px;top:192px;letter-spacing:0.33px">02s.87</div>
<div class="t" style="left:593px;top:208px;letter-spacing:0.33px">0</div>
<div class="t" style="left:693px;top:208px;letter-spacing:0.33px">03m45s.00</div>
<div class="t" style="left:774px;top:208px;letter-spacing:0.33px">.00</div>
<div class="t" style="left:593px;top:240px;letter-spacing:0.33px">2</div>
<div class="t" style="left:693px;top:240px;letter-spacing:0.33px">06s.68</div>
<div class="t" style="left:774px;top:240px;letter-spacing:0.33px">11s.45</div>
<div class="t" style="left:693px;top:272px;letter-spacing:0.33px">08s.94</div>
<div class="t" style="left:774px;top:272px;letter-spacing:0.33px">04m41s.89</div>

<svg class="a" style="left:0;top:0" width="887" height="738" viewBox="0 0 887 738">
<path d="M290.3 99 L294.5 103.2 L298.7 99" fill="none" stroke="#1c1c1c" stroke-width="1.6"/>
<rect x="587.8" y="128.60000000000002" width="1.4" height="1.4" fill="#6e6464"/><rect x="589.2" y="130.0" width="1" height="1" fill="#fbf6f6"/><rect x="587.8" y="131.60000000000002" width="1.4" height="1.4" fill="#6e6464"/><rect x="589.2" y="133.0" width="1" height="1" fill="#fbf6f6"/><rect x="587.8" y="134.60000000000002" width="1.4" height="1.4" fill="#6e6464"/><rect x="589.2" y="136.0" width="1" height="1" fill="#fbf6f6"/><rect x="687.8" y="128.60000000000002" width="1.4" height="1.4" fill="#6e6464"/><rect x="689.2" y="130.0" width="1" height="1" fill="#fbf6f6"/><rect x="687.8" y="131.60000000000002" width="1.4" height="1.4" fill="#6e6464"/><rect x="689.2" y="133.0" width="1" height="1" fill="#fbf6f6"/><rect x="687.8" y="134.60000000000002" width="1.4" height="1.4" fill="#6e6464"/><rect x="689.2" y="136.0" width="1" height="1" fill="#fbf6f6"/><rect x="768.8" y="128.60000000000002" width="1.4" height="1.4" fill="#6e6464"/><rect x="770.2" y="130.0" width="1" height="1" fill="#fbf6f6"/><rect x="768.8" y="131.60000000000002" width="1.4" height="1.4" fill="#6e6464"/><rect x="770.2" y="133.0" width="1" height="1" fill="#fbf6f6"/><rect x="768.8" y="134.60000000000002" width="1.4" height="1.4" fill="#6e6464"/><rect x="770.2" y="136.0" width="1" height="1" fill="#fbf6f6"/><rect x="849.3" y="128.60000000000002" width="1.4" height="1.4" fill="#6e6464"/><rect x="850.7" y="130.0" width="1" height="1" fill="#fbf6f6"/><rect x="849.3" y="131.60000000000002" width="1.4" height="1.4" fill="#6e6464"/><rect x="850.7" y="133.0" width="1" height="1" fill="#fbf6f6"/><rect x="849.3" y="134.60000000000002" width="1.4" height="1.4" fill="#6e6464"/><rect x="850.7" y="136.0" width="1" height="1" fill="#fbf6f6"/><rect x="309.5" y="512.5" width="1.2" height="1.2" fill="#a09c9c"/><rect x="310.5" y="513.7" width="1" height="1" fill="#e4e0e0"/><rect x="309.5" y="517.5" width="1.2" height="1.2" fill="#a09c9c"/><rect x="310.5" y="518.7" width="1" height="1" fill="#e4e0e0"/><rect x="309.5" y="521.5" width="1.2" height="1.2" fill="#a09c9c"/><rect x="310.5" y="522.7" width="1" height="1" fill="#e4e0e0"/></svg>
<div class="a" style="left:5px;top:699px;width:875px;height:1px;background:#eeeaea"></div>
<div class="a" style="left:5px;top:700px;width:875px;height:1px;background:#777373"></div>
<div class="a tab" style="left:6px;top:701px;width:90px;height:28px"></div>
<div class="t" style="left:40.5px;top:707px">Fixtures</div>
<div class="a tabsel" style="left:100.5px;top:699px;width:98.5px;height:32px"></div>
<div class="t" style="left:134.5px;top:708px">Functions</div>
<div class="a tab" style="left:202px;top:701px;width:82px;height:28px"></div>
<div class="t" style="left:238.4px;top:707px">Shows</div>
<div class="a tab" style="left:287.5px;top:701px;width:133.5px;height:28px"></div>
<div class="t" style="left:322.6px;top:707px">Virtual Console</div>
<div class="a tab" style="left:424.7px;top:701px;width:116.80000000000001px;height:28px"></div>
<div class="t" style="left:460.4px;top:707px">Simple Desk</div>
<div class="a tab" style="left:546.2px;top:701px;width:131.79999999999995px;height:28px"></div>
<div class="t" style="left:580.5px;top:707px">Inputs/Outputs</div><svg class="a" style="left:0;top:690px" width="887" height="48" viewBox="0 690 887 48"><path d="M14 712 L14.5 705 L22.5 704.5 L24.5 711" fill="none" stroke="#111" stroke-width="1.3"/><path d="M13 710 L29 712.5 L34 712 L34 724 L29 725 L14 719.5 Z" fill="#0a0a0a"/><ellipse cx="31.2" cy="718.3" rx="3" ry="5.6" fill="#e4f040" stroke="#111" stroke-width="1"/><path d="M108.5 712 L114 711.8 L117 719 L114.5 723.2 L109 720 Z" fill="#f07a1c"/><ellipse cx="118.4" cy="710.6" rx="5.9" ry="7.2" fill="#1eb4ee"/><path d="M117 717 Q122 714.5 127.8 717.5 L128.3 724.5 L122.5 727.4 L116.5 724 Z" fill="#12cc12"/><rect x="210.5" y="711.5" width="21.5" height="14.3" fill="#3c3c3c" stroke="#222" stroke-width="0.8"/><rect x="213" y="716" width="16" height="1.2" fill="#8a8a8a"/><rect x="213" y="720" width="16" height="1.2" fill="#777"/><path d="M210 711 L230 703 L232 707.5 L212 715 Z" fill="#1c1c1c"/><path d="M213.5 710 L217 708.6 L218.7 711.8 L215.2 713.1 Z M220.5 707.2 L224 705.8 L225.7 709 L222.2 710.3 Z M227 704.6 L230 703.4 L231.3 706.4 L228.6 707.5 Z" fill="#e8e8e8"/><path d="M302.6 703.3 L318 707.7 L312 725.2 L294 719.5 Z" fill="#3e3e3e" stroke="#222" stroke-width="0.8"/><path d="M298.5 712.5 L314.5 717.3 L312.3 723.8 L295.3 718.6 Z" fill="#cfcfcf"/><path d="M297 716 L300 716.8 M301.5 717.2 L304 718 M305.5 718.4 L308 719.2" stroke="#333" stroke-width="1.2"/><rect x="432.5" y="717.5" width="21.5" height="6" rx="1" fill="#ececec" stroke="#a8a8a8" stroke-width="0.6"/><path d="M434 710 H452 L453 718 H434 Z" fill="#6aa86a"/><rect x="434.5" y="708" width="5" height="5" fill="#8ac08a"/><rect x="440.5" y="708" width="5" height="5" fill="#f4f4f4"/><rect x="446.5" y="708" width="5" height="5" fill="#f4f4f4"/><rect x="442" y="709" width="2" height="4.5" fill="#222"/><rect x="448" y="709" width="2" height="4.5" fill="#222"/><rect x="436.5" y="711" width="2" height="3" fill="#2a4a2a"/><path d="M562 711 L568 705.5 L574.5 704.5 L576 710 L569 713.5 Z" fill="#f09048" opacity="0.85"/><path d="M565 708 L571 707 L571.5 711 Z" fill="#f8c8a0" opacity="0.8"/><path d="M552.5 719 L559 714 L565.5 713 L566.5 718 L560 722 L556 726 Z" fill="#b8d870" opacity="0.85"/></svg>
</div></body></html>
